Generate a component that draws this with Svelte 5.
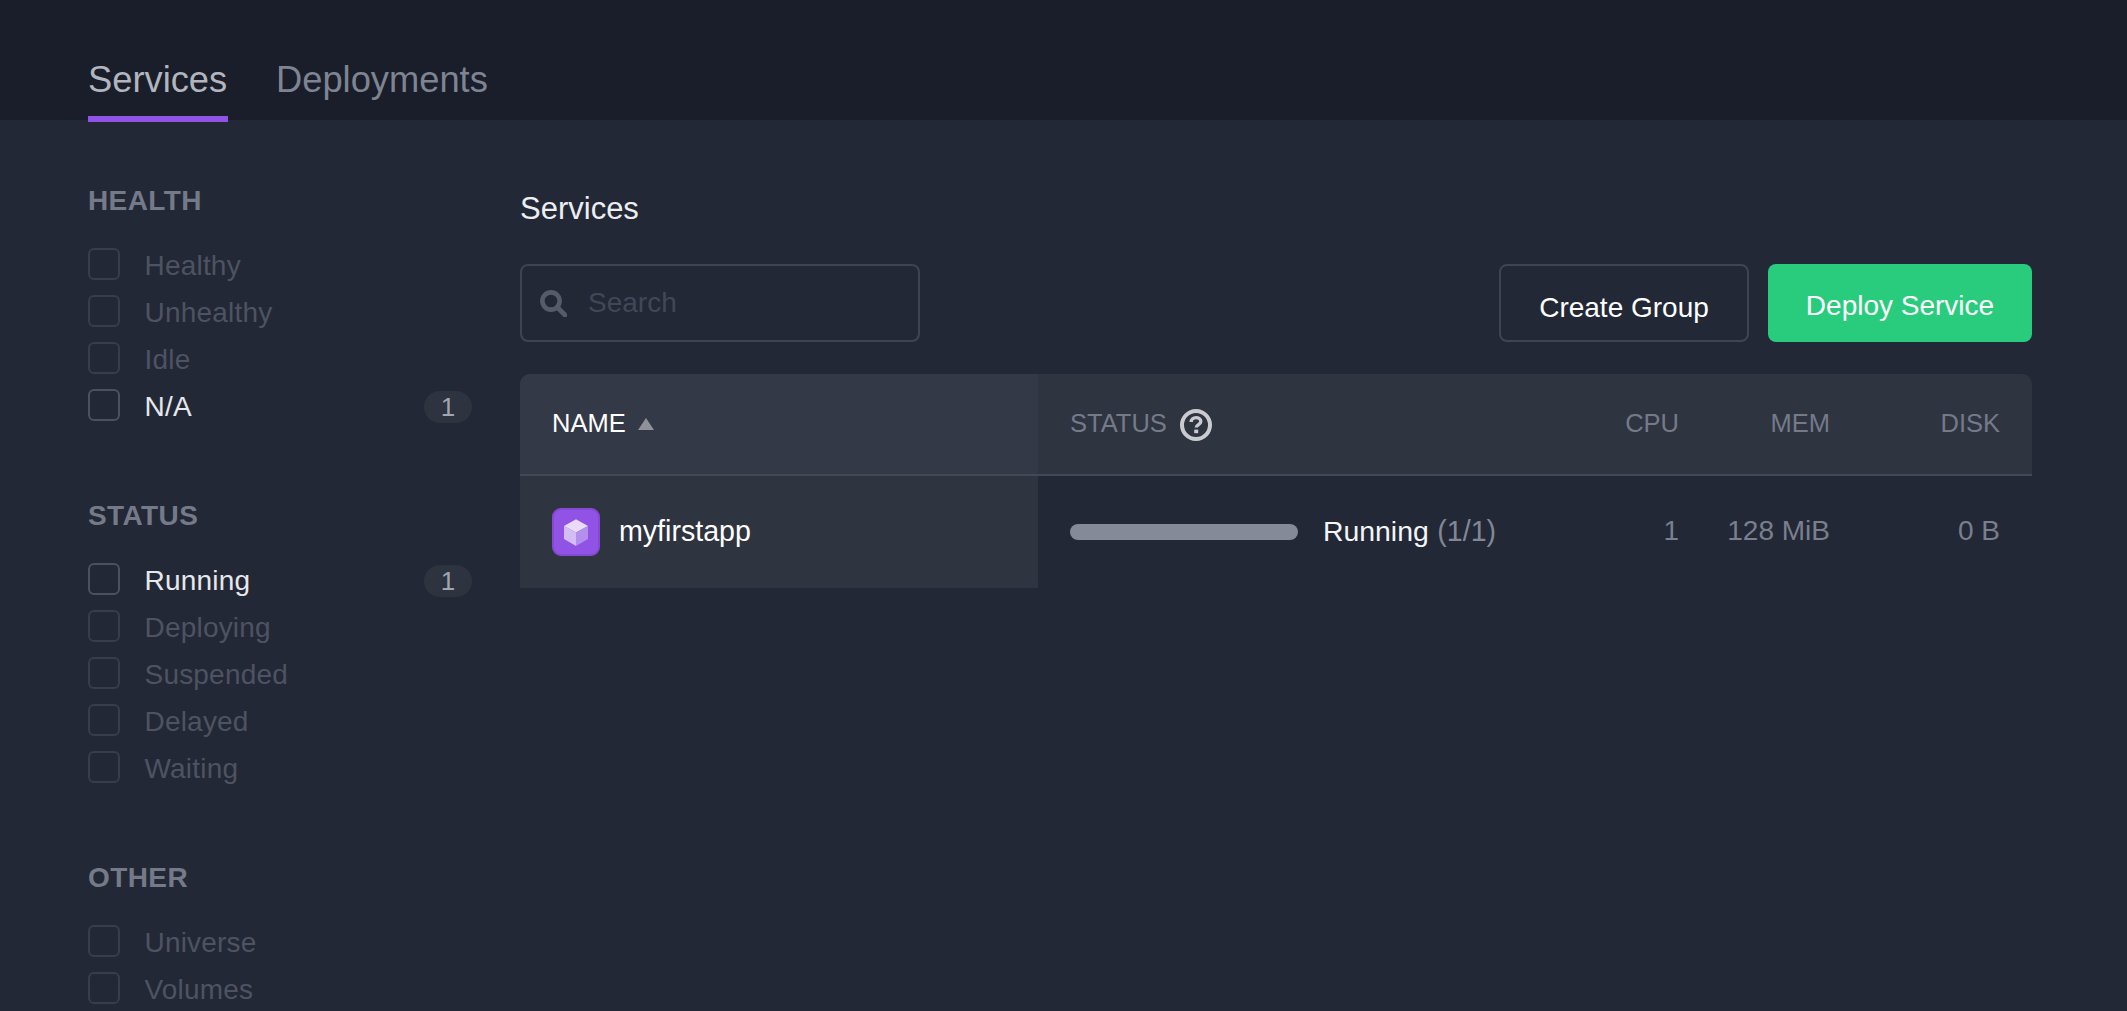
<script>
    const filters = [
        {
            title: "HEALTH",
            items: [
                { label: "Healthy", count: 0 },
                { label: "Unhealthy", count: 0 },
                { label: "Idle", count: 0 },
                { label: "N/A", count: 1 },
            ],
        },
        {
            title: "STATUS",
            items: [
                { label: "Running", count: 1 },
                { label: "Deploying", count: 0 },
                { label: "Suspended", count: 0 },
                { label: "Delayed", count: 0 },
                { label: "Waiting", count: 0 },
            ],
        },
        {
            title: "OTHER",
            items: [
                { label: "Universe", count: 0 },
                { label: "Volumes", count: 0 },
            ],
        },
    ];
</script>

<div class="page">
    <header class="top">
        <nav class="tabs">
            <a class="tab active" href="#services">Services</a>
            <a class="tab" href="#deployments">Deployments</a>
        </nav>
    </header>

    <div class="body">
        <aside class="sidebar">
            {#each filters as group}
                <section class="group">
                    <h3>{group.title}</h3>
                    <ul>
                        {#each group.items as item}
                            <li class:on={item.count > 0}>
                                <input type="checkbox" disabled={item.count === 0} />
                                <span class="label">{item.label}</span>
                                {#if item.count > 0}
                                    <span class="badge">{item.count}</span>
                                {/if}
                            </li>
                        {/each}
                    </ul>
                </section>
            {/each}
        </aside>

        <main class="main">
            <h2>Services</h2>

            <div class="toolbar">
                <label class="search">
                    <svg width="27" height="27" viewBox="0 0 27 27" aria-hidden="true">
                        <circle cx="11" cy="11" r="8.6" fill="none" stroke="#565b68" stroke-width="4.6" />
                        <path d="M17.5 17.5 L25 25" stroke="#565b68" stroke-width="4.8" stroke-linecap="round" />
                    </svg>
                    <input type="text" placeholder="Search" />
                </label>
                <div class="actions">
                    <button class="btn ghost" type="button">Create Group</button>
                    <button class="btn deploy" type="button">Deploy Service</button>
                </div>
            </div>

            <div class="table">
                <div class="row head">
                    <div class="cell name">
                        <span class="txt">NAME</span>
                        <svg class="sort" width="16" height="12" viewBox="0 0 16 12" aria-hidden="true">
                            <path d="M8 0 L16 12 L0 12 Z" fill="#8f929b" />
                        </svg>
                    </div>
                    <div class="cell stat">
                        <span class="txt">STATUS</span>
                        <svg class="help" width="32" height="32" viewBox="0 0 32 32" aria-hidden="true">
                            <circle cx="16" cy="16" r="14" fill="none" stroke="#c9cbd0" stroke-width="4" />
                            <path d="M11.2 13 C11.2 10.2 13.4 8.6 16 8.6 C18.8 8.6 20.8 10.2 20.8 12.6 C20.8 15.6 16.2 15.6 16.2 18.6" fill="none" stroke="#c9cbd0" stroke-width="3.4" />
                            <rect x="14.2" y="20.6" width="4" height="3.6" fill="#c9cbd0" />
                        </svg>
                    </div>
                    <div class="cell num"><span class="txt">CPU</span></div>
                    <div class="cell num"><span class="txt">MEM</span></div>
                    <div class="cell num"><span class="txt">DISK</span></div>
                </div>

                <div class="row item">
                    <div class="cell name">
                        <span class="appicon">
                            <svg width="24" height="27" viewBox="0 0 24 27" aria-hidden="true">
                                <path d="M12 0.3 L24 7 L12 13.6 L0 7 Z" fill="#e9dcfb" />
                                <path d="M0 7 L12 13.6 L12 27 L0 20 Z" fill="#d3bdf4" />
                                <path d="M24 7 L12 13.6 L12 27 L24 20 Z" fill="#b28fec" />
                            </svg>
                        </span>
                        <span class="txt appname">myfirstapp</span>
                    </div>
                    <div class="cell stat">
                        <span class="bar"></span>
                        <span class="txt state">Running</span>
                        <span class="txt inst">(1/1)</span>
                    </div>
                    <div class="cell num"><span class="txt">1</span></div>
                    <div class="cell num"><span class="txt">128 MiB</span></div>
                    <div class="cell num"><span class="txt">0 B</span></div>
                </div>
            </div>
        </main>
    </div>
</div>

<style>
    :global(body) {
        margin: 0;
        background: #232836;
        overflow: hidden;
    }

    .page {
        height: 1011px;
        overflow: hidden;
        background: #232836;
        font-family: "Liberation Sans", Arial, sans-serif;
        font-size: 28px;
        color: #fff;
    }

    .top {
        height: 120px;
        background: #191e2a;
        padding-left: 88px;
        box-sizing: border-box;
        display: flex;
        align-items: flex-end;
    }

    .tabs {
        display: flex;
        gap: 48px;
        margin-bottom: -2px;
    }

    .tab {
        display: block;
        min-width: 140px;
        height: 82px;
        padding-top: 19px;
        box-sizing: border-box;
        font-size: 36.3px;
        line-height: 42px;
        color: #7f8492;
        text-decoration: none;
    }

    .tab.active {
        color: #b2b5bd;
        border-bottom: 6px solid #9153e6;
    }

    .body {
        display: flex;
        gap: 48px;
        padding: 0 95px 0 88px;
    }

    .sidebar {
        width: 384px;
        flex: none;
        padding-top: 65px;
        display: flex;
        flex-direction: column;
        gap: 64px;
    }

    .group h3 {
        margin: 0 0 31px;
        font-size: 28px;
        line-height: 32px;
        font-weight: 700;
        letter-spacing: 0.4px;
        color: #757a89;
    }

    .group ul {
        margin: 0;
        padding: 0;
        list-style: none;
    }

    .group li {
        height: 47px;
        display: flex;
        align-items: flex-start;
        color: #4e5361;
        line-height: 35px;
    }

    .group li.on {
        color: #e6e8ec;
    }

    .group input {
        appearance: none;
        width: 32px;
        height: 32px;
        margin: 0 24.5px 0 0;
        box-sizing: border-box;
        border: 2px solid #383d4c;
        border-radius: 6px;
        background: transparent;
    }

    .group li.on input {
        border-color: #4c5160;
    }

    .label {
        flex: 1;
        letter-spacing: 0.2px;
    }

    .badge {
        width: 48px;
        height: 32px;
        margin-top: 2px;
        border-radius: 16px;
        background: #2e3340;
        color: #a3a6b0;
        font-size: 26px;
        line-height: 32px;
        text-align: center;
    }

    .main {
        flex: 1;
        min-width: 0;
        padding-top: 69px;
    }

    h2 {
        margin: 0 0 35px;
        font-size: 31px;
        line-height: 40px;
        font-weight: 400;
        color: #eceef1;
    }

    .toolbar {
        display: flex;
        justify-content: space-between;
        height: 78px;
        margin-bottom: 32px;
    }

    .search {
        width: 400px;
        box-sizing: border-box;
        border: 2px solid #3f4455;
        border-radius: 8px;
        padding-left: 18px;
        display: flex;
        align-items: center;
        gap: 21px;
    }

    .search input {
        flex: 1;
        min-width: 0;
        border: none;
        outline: none;
        background: transparent;
        padding: 0;
        font: inherit;
        color: #fff;
    }

    .search input::placeholder {
        color: #424757;
        opacity: 1;
    }

    .actions {
        display: flex;
        gap: 19px;
    }

    .btn {
        box-sizing: border-box;
        height: 78px;
        border-radius: 8px;
        font: inherit;
        color: #fff;
        cursor: pointer;
    }

    .ghost {
        width: 250px;
        padding: 9px 0 0;
        background: transparent;
        border: 2px solid #3f4455;
    }

    .deploy {
        width: 264px;
        padding: 5px 0 0;
        background: #29cc7d;
        border: none;
    }

    .table {
        border-radius: 10px 10px 0 0;
        overflow: hidden;
    }

    .row {
        display: grid;
        grid-template-columns: 518px 1fr 100px 151px 171px;
    }

    .head {
        height: 102px;
        background: #2f3441;
        border-bottom: 2px solid #434856;
        box-sizing: border-box;
        font-size: 25.5px;
        color: #757a89;
    }

    .item {
        height: 112px;
    }

    .cell {
        display: flex;
        align-items: center;
        min-width: 0;
    }

    .txt {
        margin-bottom: 2px;
    }

    .cell.name {
        padding-left: 32px;
        background: #2f3441;
    }

    .head .cell.name {
        background: #343947;
        color: #fff;
    }

    .sort {
        margin-left: 12px;
    }

    .cell.stat {
        padding-left: 32px;
    }

    .help {
        margin-left: 13px;
        position: relative;
        top: 1px;
    }

    .cell.num {
        justify-content: flex-end;
        padding-right: 31px;
    }

    .cell.num:last-child {
        padding-right: 32px;
    }

    .item .cell.num {
        color: #7a7f8d;
    }

    .appicon {
        width: 48px;
        height: 48px;
        box-sizing: border-box;
        border: 2px solid #8549d6;
        border-radius: 9px;
        background: #9153e6;
        display: flex;
        align-items: center;
        justify-content: center;
        margin-right: 19px;
    }

    .appname {
        font-size: 28.6px;
    }

    .bar {
        width: 228px;
        height: 16px;
        border-radius: 8px;
        background: #858a98;
        margin-right: 25px;
    }

    .state {
        font-size: 28.4px;
        color: #f4f5f7;
    }

    .inst {
        margin-left: 8.5px;
        font-size: 28.6px;
        color: #828795;
    }
</style>
